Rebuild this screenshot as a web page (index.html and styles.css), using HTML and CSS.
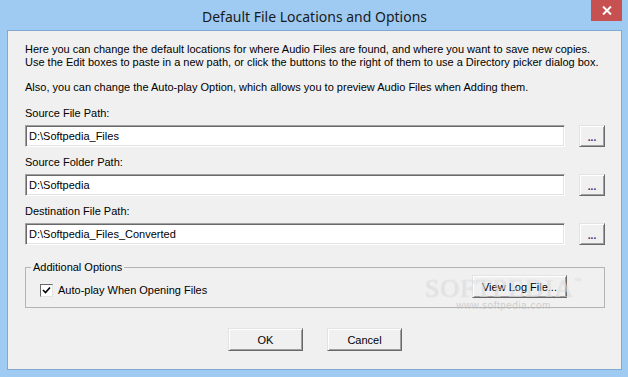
FILE: index.html
```html
<!DOCTYPE html>
<html lang="en">
  <head>
    <meta charset="UTF-8" />
    <title>Default File Locations and Options</title>
    <link rel="stylesheet" href="styles.css">
  </head>
  <body>
    <div class="window">
      <!-- Title bar -->
      <div class="titlebar">
        <span class="title">Default File Locations and Options</span>
        <span class="close">
          <svg width="10" height="9" viewBox="0 0 10 9">
            <path d="M1 0.5 L9 8.5 M9 0.5 L1 8.5" stroke="#fff" stroke-width="2" fill="none" />
          </svg>
        </span>
      </div>

      <!-- Dialog body -->
      <div class="panel">
        <p class="intro">
          Here you can change the default locations for where Audio Files are found, and where you want to save new copies.<br>
          Use the Edit boxes to paste in a new path, or click the buttons to the right of them to use a Directory picker dialog box.
        </p>
        <p class="intro also">Also, you can change the Auto-play Option, which allows you to preview Audio Files when Adding them.</p>

        <div class="field first">
          <label class="field-label">Source File Path:</label>
          <div class="field-row">
            <input class="edit" type="text" value="D:\Softpedia_Files" readonly>
            <button class="btn browse">...</button>
          </div>
        </div>
        <div class="field">
          <label class="field-label">Source Folder Path:</label>
          <div class="field-row">
            <input class="edit" type="text" value="D:\Softpedia" readonly>
            <button class="btn browse">...</button>
          </div>
        </div>
        <div class="field">
          <label class="field-label">Destination File Path:</label>
          <div class="field-row">
            <input class="edit" type="text" value="D:\Softpedia_Files_Converted" readonly>
            <button class="btn browse">...</button>
          </div>
        </div>

        <fieldset class="options">
          <legend>Additional Options</legend>
          <div class="options-row">
            <label class="check">
              <span class="check-box">
                <svg width="9" height="9" viewBox="0 0 9 9">
                  <path d="M1 4 L3.5 6.5 L8 1.5" stroke="#000" stroke-width="1.6" fill="none" />
                </svg>
              </span>
              Auto-play When Opening Files
            </label>
            <button class="btn log">View Log File...</button>
          </div>
        </fieldset>

        <div class="actions">
          <button class="btn action">OK</button>
          <button class="btn action">Cancel</button>
        </div>

        <div class="watermark">
          <span class="wm-logo">SOFTPEDIA<sup>™</sup></span>
          <span class="wm-url">www.softpedia.com</span>
        </div>
      </div>
    </div>
  </body>
</html>
```

FILE: styles.css
```css
/* Reset */
* {
  box-sizing: border-box;
  margin: 0;
  padding: 0;
}
body {
  font-family: "Liberation Sans", Arial, sans-serif;
  font-size: 11px;
  color: #000;
  overflow: hidden;
}

/* Window frame */
.window {
  display: flex;
  flex-direction: column;
  width: 628px;
  height: 377px;
  background-color: #9fcbf3;
  padding: 0 6px 7px 7px;
}
.titlebar {
  position: relative;
  height: 30px;
  display: flex;
  justify-content: center;
  align-items: center;
}
.title {
  font-family: "Noto Sans", "Open Sans", sans-serif;
  font-size: 14px;
  color: #1a1a1a;
  padding-top: 2px;
}
.close {
  position: absolute;
  top: 0;
  right: 0;
  width: 31px;
  height: 21px;
  background-color: #c75050;
  display: flex;
  justify-content: center;
  align-items: center;
}

/* Dialog body */
.panel {
  position: relative;
  flex: 1;
  background-color: #f0f0f0;
  border: 1px solid #7fa8d2;
  padding: 12px 16px 0 17px;
}
.intro {
  line-height: 13px;
  white-space: nowrap;
}
.intro.also {
  margin-top: 12px;
}

/* Path fields */
.field {
  margin-top: 9px;
}
.field.first {
  margin-top: 13px;
}
.field-label {
  display: block;
  line-height: 13px;
  margin-bottom: 5px;
}
.field-row {
  display: flex;
  gap: 14px;
}
.edit {
  flex: 1;
  height: 22px;
  font-family: inherit;
  font-size: 11px;
  color: #000;
  background-color: #fff;
  border: 1px solid;
  border-color: #a0a0a0 #fff #fff #a0a0a0;
  box-shadow: inset 1px 1px #696969, inset -1px -1px #e3e3e3;
  padding: 0 2px 0 3px;
  outline: none;
}

/* Buttons */
.btn {
  font-family: inherit;
  font-size: 11px;
  color: #000;
  background-color: #f0f0f0;
  border: 1px solid;
  border-color: #e3e3e3 #696969 #696969 #e3e3e3;
  box-shadow: inset 1px 1px #fff, inset -1px -1px #a0a0a0;
  cursor: pointer;
}
.browse {
  width: 26px;
  height: 22px;
  padding-top: 2px;
  font-size: 10px;
  font-weight: 700;
  color: #3b2a6e;
}
.log {
  width: 95px;
  height: 23px;
}
.action {
  width: 75px;
  height: 23px;
}

/* Additional options group */
.options {
  margin-top: 16px;
  border: 1px solid #b4b4b4;
  padding: 1px 37px 9px 5px;
}
.options legend {
  padding: 0 2px;
  line-height: 13px;
}
.options-row {
  display: flex;
  justify-content: space-between;
  align-items: flex-start;
}
.check {
  display: flex;
  align-items: center;
  gap: 5px;
  margin: 9px 0 0 9px;
  line-height: 13px;
}
.check-box {
  width: 13px;
  height: 13px;
  background-color: #fff;
  border: 1px solid;
  border-color: #696969 #e3e3e3 #e3e3e3 #696969;
  display: flex;
  justify-content: center;
  align-items: center;
}

/* OK / Cancel */
.actions {
  display: flex;
  justify-content: center;
  gap: 24px;
  margin-top: 20px;
}

/* Softpedia watermark */
.watermark {
  position: absolute;
  left: 417px;
  top: 243px;
  display: flex;
  flex-direction: column;
  align-items: center;
  pointer-events: none;
}
.wm-logo {
  font-family: "Liberation Serif", serif;
  font-size: 26px;
  letter-spacing: 1px;
  color: rgba(255, 255, 255, 0.55);
  text-shadow: 0 0 1px rgba(0, 0, 0, 0.2);
}
.wm-logo sup {
  font-size: 7px;
  vertical-align: 14px;
}
.wm-url {
  font-size: 10px;
  letter-spacing: 0.5px;
  margin-top: -4px;
  color: rgba(190, 190, 190, 0.7);
}
```
